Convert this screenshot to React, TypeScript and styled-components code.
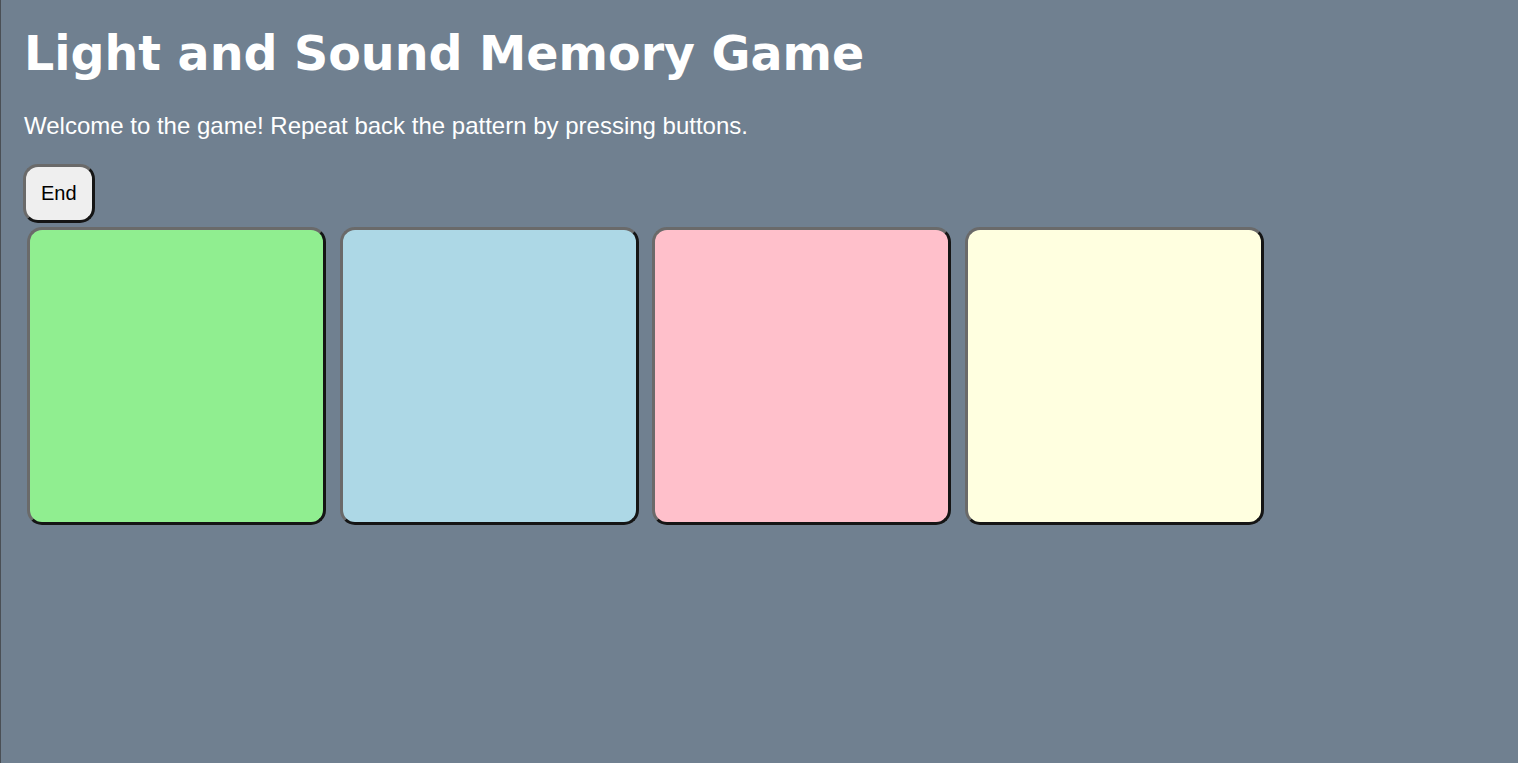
import React from "react";
import styled, { createGlobalStyle } from "styled-components";

const Global = createGlobalStyle`
  html, body { margin: 0; padding: 0; }
  body {
    background: #708090;
    font-family: "Liberation Sans", Arial, sans-serif;
    color: white;
    min-height: 763px;
    box-sizing: border-box;
    border-left: 1px solid #4a4f55;
  }
`;

const Page = styled.div`
  padding: 8px 0 0 22px;
`;

const Title = styled.h1`
  font-family: "DejaVu Sans", Verdana, sans-serif;
  font-weight: bold;
  font-size: 47.5px;
  margin: 17px 0 0 1px;
  line-height: 1.2;
`;

const Intro = styled.p`
  font-size: 24px;
  margin: 30px 0 0 1px;
  line-height: 1.15;
`;

const ControlButton = styled.button`
  font-family: "Liberation Sans", Arial, sans-serif;
  font-size: 20px;
  color: black;
  background: #efefef;
  border: 3px outset #6a6a6a;
  border-radius: 15px;
  padding: 15px 15px;
  margin: 24px 0 0 0;
  display: block;
`;

const Board = styled.div`
  display: flex;
  gap: 13.7px;
  padding-left: 4px;
  margin-top: 4px;
`;

const Pad = styled.button<{ $color: string }>`
  width: 299px;
  height: 298px;
  box-sizing: border-box;
  background: ${(p) => p.$color};
  border: 3px outset #6a6a6a;
  border-radius: 15px;
  padding: 0;
`;

const pads = ["lightgreen", "lightblue", "pink", "lightyellow"];

export default function App() {
  return (
    <>
      <Global />
      <Page>
        <Title>Light and Sound Memory Game</Title>
        <Intro>Welcome to the game! Repeat back the pattern by pressing buttons.</Intro>
        <ControlButton>End</ControlButton>
        <Board>
          {pads.map((c) => (
            <Pad key={c} $color={c} />
          ))}
        </Board>
      </Page>
    </>
  );
}
